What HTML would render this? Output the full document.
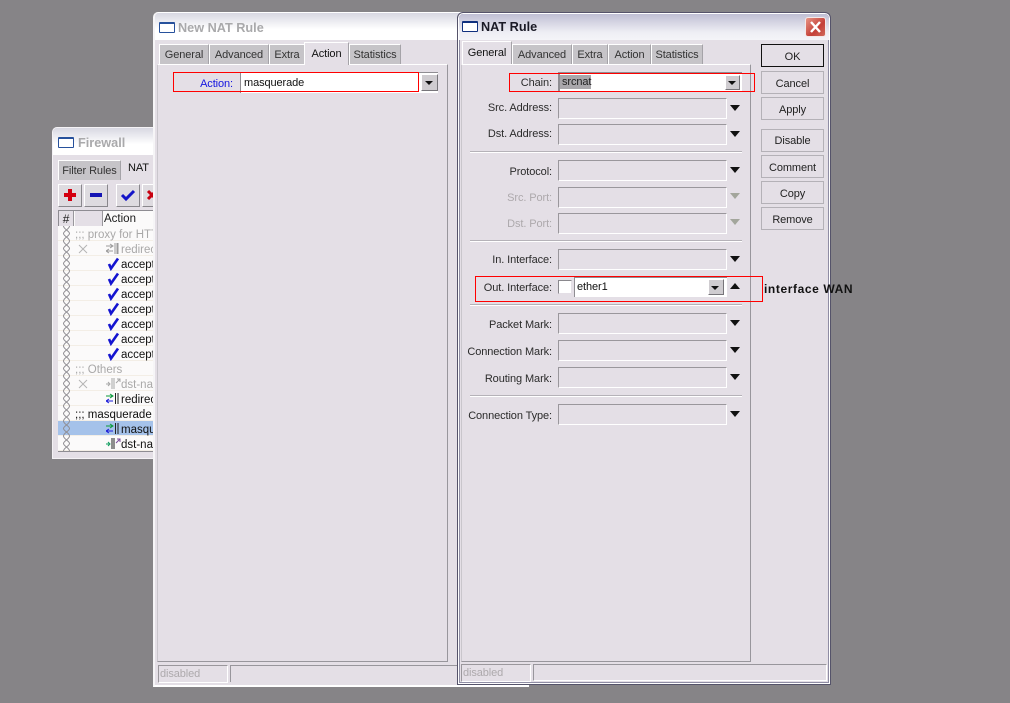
<!DOCTYPE html>
<html><head><meta charset="utf-8"><style>
*{box-sizing:border-box}
html,body{margin:0;padding:0}
body{width:1010px;height:703px;background:#868487;position:relative;overflow:hidden;font:11px "Liberation Sans",sans-serif;letter-spacing:-.1px;color:#1a1a1a}
div,span,svg{position:absolute;white-space:nowrap}
.win{background:#e4dfe6;border:1px solid #fff;border-radius:5px 5px 0 0}
.tb{left:0;right:0;top:0;height:27px;border-radius:4px 4px 0 0;background:linear-gradient(#d8d8e2,#fff 60%,#fff)}
.ic{width:16px;height:11px;border:1px solid #27519c;border-top-width:2px;background:#fff;border-radius:1px}
.ti{font-weight:bold;font-size:12.7px;letter-spacing:0;color:#a9a9ab}
.tab{background:#c6c4c8;border-top:1px solid #fff;border-left:1px solid #fff;border-right:1px solid #a5a3a8;height:20px;text-align:center;line-height:21px;color:#333}
.tab.on{background:#e4dfe6;height:23px;line-height:22px;color:#111}
.panel{border:1px solid #98969c;border-top:1px solid #fff;border-left:1px solid #c9c6cc;background:#e4dfe6}
.st{border:1px solid;border-color:#9a979c #fff #fff #9a979c;background:#e4dfe6}
.l{text-align:right;width:100px;height:14px;line-height:14px;margin-top:1px;color:#2b2b2b}
.dis{color:#ada9ac}
.f{left:558px;width:169px;height:21px;border:1px solid;border-color:#9a979c #fff #fff #9a979c}
.a{width:0;height:0;border-left:5px solid transparent;border-right:5px solid transparent;border-top:6px solid #111}
.sep{left:470px;width:272px;height:2px;background:linear-gradient(#b5b2b8 50%,#fff 50%)}
.b{left:761px;width:63px;height:23px;border:1px solid;border-color:#fff #86848a #86848a #fff;background:#e4dfe6;text-align:center;line-height:23px;outline:1px solid #b4b1b7;outline-offset:-1px;color:#222}
.dd{width:15px;height:15px;background:#cfccd0;border:1px solid;border-color:#fff #77757a #77757a #fff}
.dd i{position:absolute;left:2px;top:5px;width:0;height:0;border-left:4px solid transparent;border-right:4px solid transparent;border-top:4px solid #111}
.red{border:1px solid #ff0000;background:transparent}
.r{left:58px;width:96px;height:15px;border-bottom:1px solid #f3eee6;background:#fbfafa;line-height:15px;color:#111;font-size:11.5px;letter-spacing:0}
.r.g{color:#a9a8a8}
.r span{top:2px}
.r svg.ck{left:49px;top:1px}
.r svg.ar{left:48px;top:2px}
.btn{width:24px;height:23px;background:#dedbe0;border:1px solid;border-color:#fff #89878c #89878c #fff;top:184px}
</style></head><body>

<!-- Firewall -->
<div class="win" style="left:52px;top:127px;width:110px;height:332px;border-color:#f4f2f5">
 <div class="tb"></div>
</div>
<div class="ic" style="left:58px;top:137px"></div>
<div class="ti" style="left:78px;top:136px">Firewall</div>
<div class="tab" style="left:58px;top:160px;width:63px">Filter Rules</div>
<div style="left:128px;top:162px;color:#111">NAT</div>
<div class="btn" style="left:58px"><svg style="left:3px;top:2px" width="16" height="16"><path d="M8 2v12M2 8h12" stroke="#d40010" stroke-width="4"/></svg></div>
<div class="btn" style="left:84px"><svg style="left:4px;top:2px" width="14" height="16"><path d="M1 8h12" stroke="#1414b4" stroke-width="4"/></svg></div>
<div class="btn" style="left:116px"><svg style="left:3px;top:2px" width="16" height="16"><path d="M2 8l4 4 8-8" fill="none" stroke="#1414c8" stroke-width="3"/></svg></div>
<div class="btn" style="left:142px;width:14px"><svg style="left:3px;top:3px" width="10" height="14"><path d="M2 3l8 8M10 3l-8 8" stroke="#c80010" stroke-width="3"/></svg></div>
<div style="left:58px;top:210px;width:96px;height:242px;background:#fbfafa;border-left:1px solid #8e8c92;border-top:1px solid #8e8c92;border-bottom:1px solid #8e8c92"></div>
<div style="left:59px;top:211px;width:15px;height:15px;background:#e4dfe6;border-right:1px solid #99979c;text-align:center;line-height:16px;font-size:12px">#</div>
<div style="left:75px;top:211px;width:28px;height:15px;background:#e4dfe6;border-right:1px solid #99979c"></div>
<div style="left:104px;top:212px;width:50px;height:15px;background:transparent;line-height:15px;font-size:11.5px;letter-spacing:0">Action</div>
<div class="r g" style="top:226px"><span style="left:17px">;;; proxy for HTT</span></div>
<div class="r g" style="top:241px"><svg style="left:20px;top:3px" width="10" height="10"><path d="M1 1l8 8M9 1l-8 8" stroke="#b5b4b4"/></svg><svg class="ar" width="14" height="11"><path d="M0 3h6M4 1l3 2-3 2M7 8H1M3 6L0 8l3 2M9 0v11" fill="none" stroke="#9b9b9b"/><path d="M11.5 0v11" stroke="#9b9b9b" stroke-width="2"/></svg><span style="left:63px">redirec</span></div>
<div class="r" style="top:256px"><svg class="ck" width="13" height="14"><path d="M2 7l2 4.5L11 1.5" fill="none" stroke="#1414d0" stroke-width="2.6"/></svg><span style="left:63px">accept</span></div>
<div class="r" style="top:271px"><svg class="ck" width="13" height="14"><path d="M2 7l2 4.5L11 1.5" fill="none" stroke="#1414d0" stroke-width="2.6"/></svg><span style="left:63px">accept</span></div>
<div class="r" style="top:286px"><svg class="ck" width="13" height="14"><path d="M2 7l2 4.5L11 1.5" fill="none" stroke="#1414d0" stroke-width="2.6"/></svg><span style="left:63px">accept</span></div>
<div class="r" style="top:301px"><svg class="ck" width="13" height="14"><path d="M2 7l2 4.5L11 1.5" fill="none" stroke="#1414d0" stroke-width="2.6"/></svg><span style="left:63px">accept</span></div>
<div class="r" style="top:316px"><svg class="ck" width="13" height="14"><path d="M2 7l2 4.5L11 1.5" fill="none" stroke="#1414d0" stroke-width="2.6"/></svg><span style="left:63px">accept</span></div>
<div class="r" style="top:331px"><svg class="ck" width="13" height="14"><path d="M2 7l2 4.5L11 1.5" fill="none" stroke="#1414d0" stroke-width="2.6"/></svg><span style="left:63px">accept</span></div>
<div class="r" style="top:346px"><svg class="ck" width="13" height="14"><path d="M2 7l2 4.5L11 1.5" fill="none" stroke="#1414d0" stroke-width="2.6"/></svg><span style="left:63px">accept</span></div>
<div class="r g" style="top:361px"><span style="left:17px">;;; Others</span></div>
<div class="r g" style="top:376px"><svg style="left:20px;top:3px" width="10" height="10"><path d="M1 1l8 8M9 1l-8 8" stroke="#b5b4b4"/></svg><svg class="ar" width="15" height="11"><path d="M0 6h3M2 4l2 2-2 2M6 0v11M8 0v11M10 5l4-4M11 1h3v3" fill="none" stroke="#a5a5a5"/></svg><span style="left:63px">dst-nat</span></div>
<div class="r" style="top:391px"><svg class="ar" width="14" height="11"><path d="M0 3h6M4 1l3 2-3 2" fill="none" stroke="#0a9a3a"/><path d="M7 8H1M3 6L0 8l3 2" fill="none" stroke="#1a1ad8"/><path d="M9.500 0v11M12 0v11" stroke="#222"/></svg><span style="left:63px">redirec</span></div>
<div class="r" style="top:406px"><span style="left:17px">;;; masquerade h</span></div>
<div class="r" style="top:421px;background:#a5c2ea"><svg class="ar" width="14" height="11"><path d="M0 3h6M4 1l3 2-3 2" fill="none" stroke="#0a9a3a"/><path d="M7 8H1M3 6L0 8l3 2" fill="none" stroke="#1a1ad8"/><path d="M9.500 0v11M12 0v11" stroke="#222"/></svg><span style="left:63px">masqu</span></div>
<div class="r" style="top:436px"><svg class="ar" width="15" height="11"><path d="M0 6h3M2 4l2 2-2 2" fill="none" stroke="#0a9a5a"/><path d="M6 0v11M8 0v11" stroke="#222"/><path d="M10 5l4-4M11 1h3v3" fill="none" stroke="#7a4a9a"/></svg><span style="left:63px">dst-nat</span></div>
<svg style="left:62px;top:226px" width="9" height="226" fill="none">
 <defs><pattern id="ch" width="9" height="15" patternUnits="userSpaceOnUse"><path d="M1.500 0C1.500 3 7.500 5 7.500 7.500C7.500 10 1.500 12 1.500 15M7.500 0C7.500 3 1.500 5 1.500 7.500C1.500 10 7.500 12 7.500 15" stroke="#8f8d92" fill="none"/></pattern></defs>
 <rect width="9" height="226" fill="url(#ch)"/>
</svg>

<!-- New NAT Rule -->
<div class="win" style="left:153px;top:12px;width:376px;height:675px;border-left:2px solid #f6f5f7;border-bottom:2px solid #fff">
 <div class="tb"></div>
</div>
<div class="ic" style="left:159px;top:22px"></div>
<div class="ti" style="left:178px;top:21px">New NAT Rule</div>
<div class="panel" style="left:157px;top:64px;width:291px;height:598px"></div>
<div class="tab" style="left:159px;top:44px;width:50px">General</div>
<div class="tab" style="left:209px;top:44px;width:60px">Advanced</div>
<div class="tab" style="left:269px;top:44px;width:36px">Extra</div>
<div class="tab on" style="left:304px;top:42px;width:45px">Action</div>
<div class="tab" style="left:349px;top:44px;width:52px">Statistics</div>
<div style="left:240px;top:72px;width:198px;height:21px;background:#fff;border-top:1px solid #8f8d92;border-left:1px solid #8f8d92"></div>
<div style="left:244px;top:77px;color:#111">masquerade</div>
<div class="dd" style="left:421px;top:74px;width:17px;height:17px"><i style="left:3px;top:6px"></i></div>
<div class="red" style="left:173px;top:72px;width:246px;height:20px"></div>
<div class="l" style="left:133px;top:76px;color:#1414e0">Action:</div>
<div class="st" style="left:158px;top:665px;width:70px;height:18px"></div>
<div class="dis" style="left:160px;top:668px">disabled</div>
<div style="left:230px;top:665px;width:228px;height:17px;border-top:1px solid #98969c;border-left:1px solid #98969c"></div>

<!-- NAT Rule -->
<div class="win" style="left:457px;top:12px;width:374px;height:673px;border:1px solid #55536a;box-shadow:inset 0 0 0 1px #fff,inset 0 0 0 2px #8f8da4;border-radius:6px 6px 0 0"></div>
<div style="left:459px;top:14px;width:370px;height:26px;border-radius:4px 4px 0 0;background:linear-gradient(#c0bfd4,#eeeef4 70%,#f4f4f8)"></div>
<div class="ic" style="left:462px;top:21px;border-color:#10307e"></div>
<div style="left:481px;top:20px;font-weight:bold;font-size:12.7px;letter-spacing:0;color:#1a1a26">NAT Rule</div>
<div style="left:805px;top:17px;width:21px;height:20px;background:linear-gradient(135deg,#e89484,#c44038 60%,#d06a5c);border:1px solid #f4e8e8;border-radius:3px"><svg style="left:3px;top:3px" width="13" height="12"><path d="M2 1l9 10M11 1l-9 10" stroke="#fff" stroke-width="2.4"/></svg></div>
<div class="panel" style="left:461px;top:64px;width:290px;height:598px"></div>
<div class="tab on" style="left:462px;top:41px;width:50px">General</div>
<div class="tab" style="left:512px;top:44px;width:60px">Advanced</div>
<div class="tab" style="left:572px;top:44px;width:36px">Extra</div>
<div class="tab" style="left:608px;top:44px;width:43px">Action</div>
<div class="tab" style="left:651px;top:44px;width:52px">Statistics</div>

<div class="b" style="top:44px;outline:1px solid #111;border-color:#fff #555 #555 #fff;line-height:25px">OK</div>
<div class="b" style="top:71px;line-height:24px">Cancel</div>
<div class="b" style="top:97px;line-height:24px">Apply</div>
<div class="b" style="top:129px;line-height:22px">Disable</div>
<div class="b" style="top:155px;line-height:24px">Comment</div>
<div class="b" style="top:181px;line-height:24px">Copy</div>
<div class="b" style="top:207px;line-height:24px">Remove</div>

<div class="l" style="left:452px;top:75px">Chain:</div>
<div style="left:558px;top:72px;width:184px;height:20px;background:#fff;border-top:2px solid #8f8d92;border-left:2px solid #8f8d92"></div>
<div style="left:560px;top:75px;width:31px;height:14px;background:#a9a7ab"></div>
<div style="left:562px;top:76px;color:#222">srcnat</div>
<div class="dd" style="left:725px;top:75px"><i></i></div>
<div class="red" style="left:509px;top:73px;width:246px;height:19px"></div>

<div class="l" style="left:452px;top:100px">Src. Address:</div><div class="f" style="top:98px"></div><div class="a" style="left:730px;top:105px"></div>
<div class="l" style="left:452px;top:126px">Dst. Address:</div><div class="f" style="top:124px"></div><div class="a" style="left:730px;top:131px"></div>
<div class="sep" style="top:151px"></div>
<div class="l" style="left:452px;top:164px">Protocol:</div><div class="f" style="top:160px"></div><div class="a" style="left:730px;top:167px"></div>
<div class="l dis" style="left:452px;top:190px">Src. Port:</div><div class="f" style="top:187px"></div><div class="a" style="left:730px;top:193px;border-top-color:#a3a69c"></div>
<div class="l dis" style="left:452px;top:216px">Dst. Port:</div><div class="f" style="top:213px"></div><div class="a" style="left:730px;top:219px;border-top-color:#a3a69c"></div>
<div class="sep" style="top:240px"></div>
<div class="l" style="left:452px;top:252px">In. Interface:</div><div class="f" style="top:249px"></div><div class="a" style="left:730px;top:256px"></div>

<div class="l" style="left:452px;top:280px">Out. Interface:</div>
<div style="left:558px;top:280px;width:14px;height:14px;background:#fff;border:1px solid;border-color:#8a888d #e4dfe6 #e4dfe6 #8a888d"></div>
<div style="left:574px;top:277px;width:153px;height:20px;background:#fff;border-top:1px solid #8f8d92;border-left:1px solid #8f8d92"></div>
<div style="left:577px;top:281px;color:#111">ether1</div>
<div class="dd" style="left:708px;top:279px;height:16px;width:16px"><i style="top:6px"></i></div>
<div class="a" style="left:730px;top:283px;border-top:0;border-bottom:6px solid #111"></div>
<div class="red" style="left:475px;top:276px;width:288px;height:26px"></div>
<div style="left:764px;top:282px;font-weight:bold;font-size:12px;color:#111;letter-spacing:.6px">interface WAN</div>

<div class="sep" style="top:304px"></div>
<div class="l" style="left:452px;top:317px">Packet Mark:</div><div class="f" style="top:313px"></div><div class="a" style="left:730px;top:320px"></div>
<div class="l" style="left:452px;top:344px">Connection Mark:</div><div class="f" style="top:340px"></div><div class="a" style="left:730px;top:347px"></div>
<div class="l" style="left:452px;top:371px">Routing Mark:</div><div class="f" style="top:367px"></div><div class="a" style="left:730px;top:374px"></div>
<div class="sep" style="top:395px"></div>
<div class="l" style="left:452px;top:408px">Connection Type:</div><div class="f" style="top:404px"></div><div class="a" style="left:730px;top:411px"></div>

<div class="st" style="left:461px;top:664px;width:70px;height:18px"></div>
<div class="dis" style="left:463px;top:667px">disabled</div>
<div style="left:533px;top:664px;width:294px;height:17px;border-top:1px solid #98969c;border-left:1px solid #98969c;border-bottom:1px solid #fff;border-right:1px solid #fff"></div>
</body></html>
